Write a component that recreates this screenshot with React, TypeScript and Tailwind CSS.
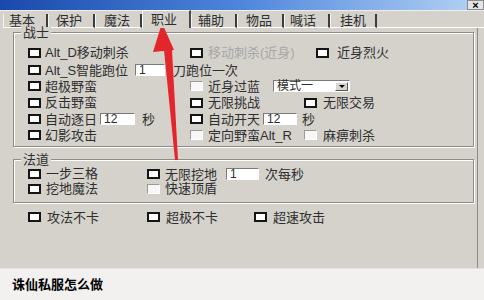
import type { ReactNode } from "react";

const font = "font-['Liberation_Sans','Noto_Sans_CJK_SC',sans-serif]";

function Check({ off }: { off?: boolean }) {
  return off ? (
    <span className="inline-block h-[10px] w-[13px] shrink-0 border border-b-white border-l-[#9a9a9a] border-r-white border-t-[#9a9a9a] bg-[#f7f7f7]" />
  ) : (
    <span className="inline-block h-[10px] w-[13px] shrink-0 border-2 border-[#151515] bg-white" />
  );
}

function Label({ children, off }: { children: ReactNode; off?: boolean }) {
  return (
    <span className={`whitespace-nowrap text-[13px] leading-none ${off ? "text-[#a6a6a6]" : "text-[#2e2e2e]"}`}>
      {children}
    </span>
  );
}

function Group({ label, children }: { label: string; children: ReactNode }) {
  return (
    <div className="relative ml-[13px] w-[461px] border border-[#8e8c88] shadow-[inset_1px_1px_0_#fff,1px_1px_0_#fff]">
      <span className="absolute -top-[6px] left-[7px] bg-[#d5d2cc] px-[2px] text-[13px] leading-[12px] text-[#2e2e2e]">
        {label}
      </span>
      {children}
    </div>
  );
}

const field =
  "flex h-[12px] items-center border border-b-white border-l-[#7a7a7a] border-r-white border-t-[#7a7a7a] bg-white pl-[3px] text-[12px] leading-none text-[#2e2e2e]";

const tabs = [
  { name: "基本", w: "w-[45px]", pl: "pl-[5px]" },
  { name: "保护", w: "w-[47px]", pl: "pl-[7px]" },
  { name: "魔法", w: "w-[47px]", pl: "pl-[8px]" },
  { name: "职业", w: "w-[49px]", pl: "pl-[8px]", active: true },
  { name: "辅助", w: "w-[46px]", pl: "pl-[6px]" },
  { name: "物品", w: "w-[47px]", pl: "pl-[8px]" },
  { name: "喊话", w: "w-[46px]", pl: "pl-[5px]" },
  { name: "挂机", w: "w-[47px]", pl: "pl-[9px]" },
];

export default function App() {
  return (
    <div className={`relative h-[300px] w-[484px] overflow-hidden bg-[#d5d2cc] ${font}`}>
      {/* title bar */}
      <div className="flex h-[10px] justify-end bg-gradient-to-r from-[#1a49ac] via-[#4f86dc] to-[#b6d3f3]">
        <div className="flex h-[10px] w-[17px] items-center justify-center border border-[#8a8a8a] bg-[#e4e4e4] text-[11px] font-bold leading-none text-black">
          ×
        </div>
      </div>

      {/* tabs */}
      <div className="flex h-[18px] items-end border-t border-[#efefef] pl-[3px]">
        {tabs.map((t) =>
          t.active ? (
            <div
              key={t.name}
              className={`relative z-10 flex h-[18px] items-center border-l border-r-2 border-t border-l-white border-r-[#4a4a4a] border-t-white bg-[#d5d2cc] ${t.w} ${t.pl} text-[13px] leading-none text-[#2e2e2e]`}
            >
              {t.name}
            </div>
          ) : (
            <div
              key={t.name}
              className={`flex h-[14px] items-center border-b border-l border-r-2 border-b-white border-l-[#f4f4f4] border-r-[#3c3c3c] ${t.w} ${t.pl} text-[13px] leading-none text-[#2e2e2e]`}
            >
              {t.name}
            </div>
          )
        )}
        <div className="h-[1px] flex-1 bg-white" />
      </div>

      {/* panel */}
      <div className="h-[240px] w-[478px] border-r border-r-[#8a8a8a] pt-[4px]">
        <Group label="战士">
          <div className="pb-[3px] pl-[14px] pt-[11px]">
            <div className="flex h-[17px] items-center">
              <div className="flex w-[162px] items-center gap-[4px]">
                <Check />
                <Label>Alt_D移动刺杀</Label>
              </div>
              <div className="flex w-[126px] items-center gap-[5px]">
                <Check />
                <Label off>移动刺杀(近身)</Label>
              </div>
              <div className="flex items-center gap-[8px]">
                <Check />
                <Label>近身烈火</Label>
              </div>
            </div>

            <div className="flex h-[17px] items-center">
              <div className="flex items-center gap-[4px]">
                <Check />
                <span className="w-[90px]">
                  <Label>Alt_S智能跑位</Label>
                </span>
              </div>
              <div className={`${field} w-[30px]`}>1</div>
              <span className="ml-[8px]">
                <Label>刀跑位一次</Label>
              </span>
            </div>

            <div className="flex h-[16px] items-center">
              <div className="flex w-[162px] items-center gap-[4px]">
                <Check />
                <Label>超极野蛮</Label>
              </div>
              <div className="flex items-center gap-[5px]">
                <Check off />
                <span className="w-[65px]">
                  <Label>近身过蓝</Label>
                </span>
              </div>
              <div className={`${field} w-[77px] justify-between pr-[1px]`}>
                <span>模式一</span>
                <span className="flex h-[9px] w-[13px] items-center justify-center border border-b-[#555] border-l-white border-r-[#555] border-t-white bg-[#d8d5cf]">
                  <span className="h-0 w-0 border-l-[3px] border-r-[3px] border-t-[3px] border-l-transparent border-r-transparent border-t-black" />
                </span>
              </div>
            </div>

            <div className="flex h-[17px] items-center">
              <div className="flex w-[162px] items-center gap-[4px]">
                <Check />
                <Label>反击野蛮</Label>
              </div>
              <div className="flex w-[114px] items-center gap-[5px]">
                <Check />
                <Label>无限挑战</Label>
              </div>
              <div className="flex items-center gap-[6px]">
                <Check />
                <Label>无限交易</Label>
              </div>
            </div>

            <div className="flex h-[16px] items-center">
              <div className="flex w-[162px] items-center">
                <Check />
                <span className="ml-[4px] w-[55px]">
                  <Label>自动逐日</Label>
                </span>
                <div className={`${field} w-[35px]`}>12</div>
                <span className="ml-[7px]">
                  <Label>秒</Label>
                </span>
              </div>
              <div className="flex items-center">
                <Check />
                <span className="ml-[5px] w-[55px]">
                  <Label>自动开天</Label>
                </span>
                <div className={`${field} w-[34px]`}>12</div>
                <span className="ml-[5px]">
                  <Label>秒</Label>
                </span>
              </div>
            </div>

            <div className="flex h-[16px] items-center">
              <div className="flex w-[162px] items-center gap-[4px]">
                <Check />
                <Label>幻影攻击</Label>
              </div>
              <div className="flex w-[114px] items-center gap-[5px]">
                <Check off />
                <Label>定向野蛮Alt_R</Label>
              </div>
              <div className="flex items-center gap-[6px]">
                <Check off />
                <Label>麻痹刺杀</Label>
              </div>
            </div>
          </div>
        </Group>

        <div className="h-[12px]" />

        <Group label="法道">
          <div className="pb-[6px] pl-[14px] pt-[6px]">
            <div className="flex h-[15px] items-center">
              <div className="flex w-[119px] items-center gap-[5px]">
                <Check />
                <Label>一步三格</Label>
              </div>
              <div className="flex items-center">
                <Check />
                <span className="ml-[5px] w-[61px]">
                  <Label>无限挖地</Label>
                </span>
                <div className={`${field} w-[33px]`}>1</div>
                <span className="ml-[6px]">
                  <Label>次每秒</Label>
                </span>
              </div>
            </div>
            <div className="flex h-[15px] items-center">
              <div className="flex w-[119px] items-center gap-[5px]">
                <Check />
                <Label>挖地魔法</Label>
              </div>
              <div className="flex items-center gap-[5px]">
                <Check off />
                <Label>快速顶盾</Label>
              </div>
            </div>
          </div>
        </Group>

        <div className="mt-[6px] flex h-[16px] items-center pl-[28px]">
          <div className="flex w-[119px] items-center gap-[6px]">
            <Check />
            <Label>攻法不卡</Label>
          </div>
          <div className="flex w-[107px] items-center gap-[6px]">
            <Check />
            <Label>超极不卡</Label>
          </div>
          <div className="flex items-center gap-[6px]">
            <Check />
            <Label>超速攻击</Label>
          </div>
        </div>
      </div>

      {/* caption */}
      <div className="flex h-[32px] items-center border-t border-[#e4e2de] bg-[#f2f1f0] pl-[12px]">
        <span className="text-[13px] font-bold leading-none text-black">诛仙私服怎么做</span>
      </div>

      {/* red arrow drawn over the window */}
      <svg className="pointer-events-none absolute left-0 top-0" width="484" height="300" viewBox="0 0 484 300">
        <polygon points="162,23 153,52 174,50" fill="#e2262b" />
        <polygon points="164,50 172,50 178,160 175,160" fill="#e2262b" />
      </svg>
    </div>
  );
}
